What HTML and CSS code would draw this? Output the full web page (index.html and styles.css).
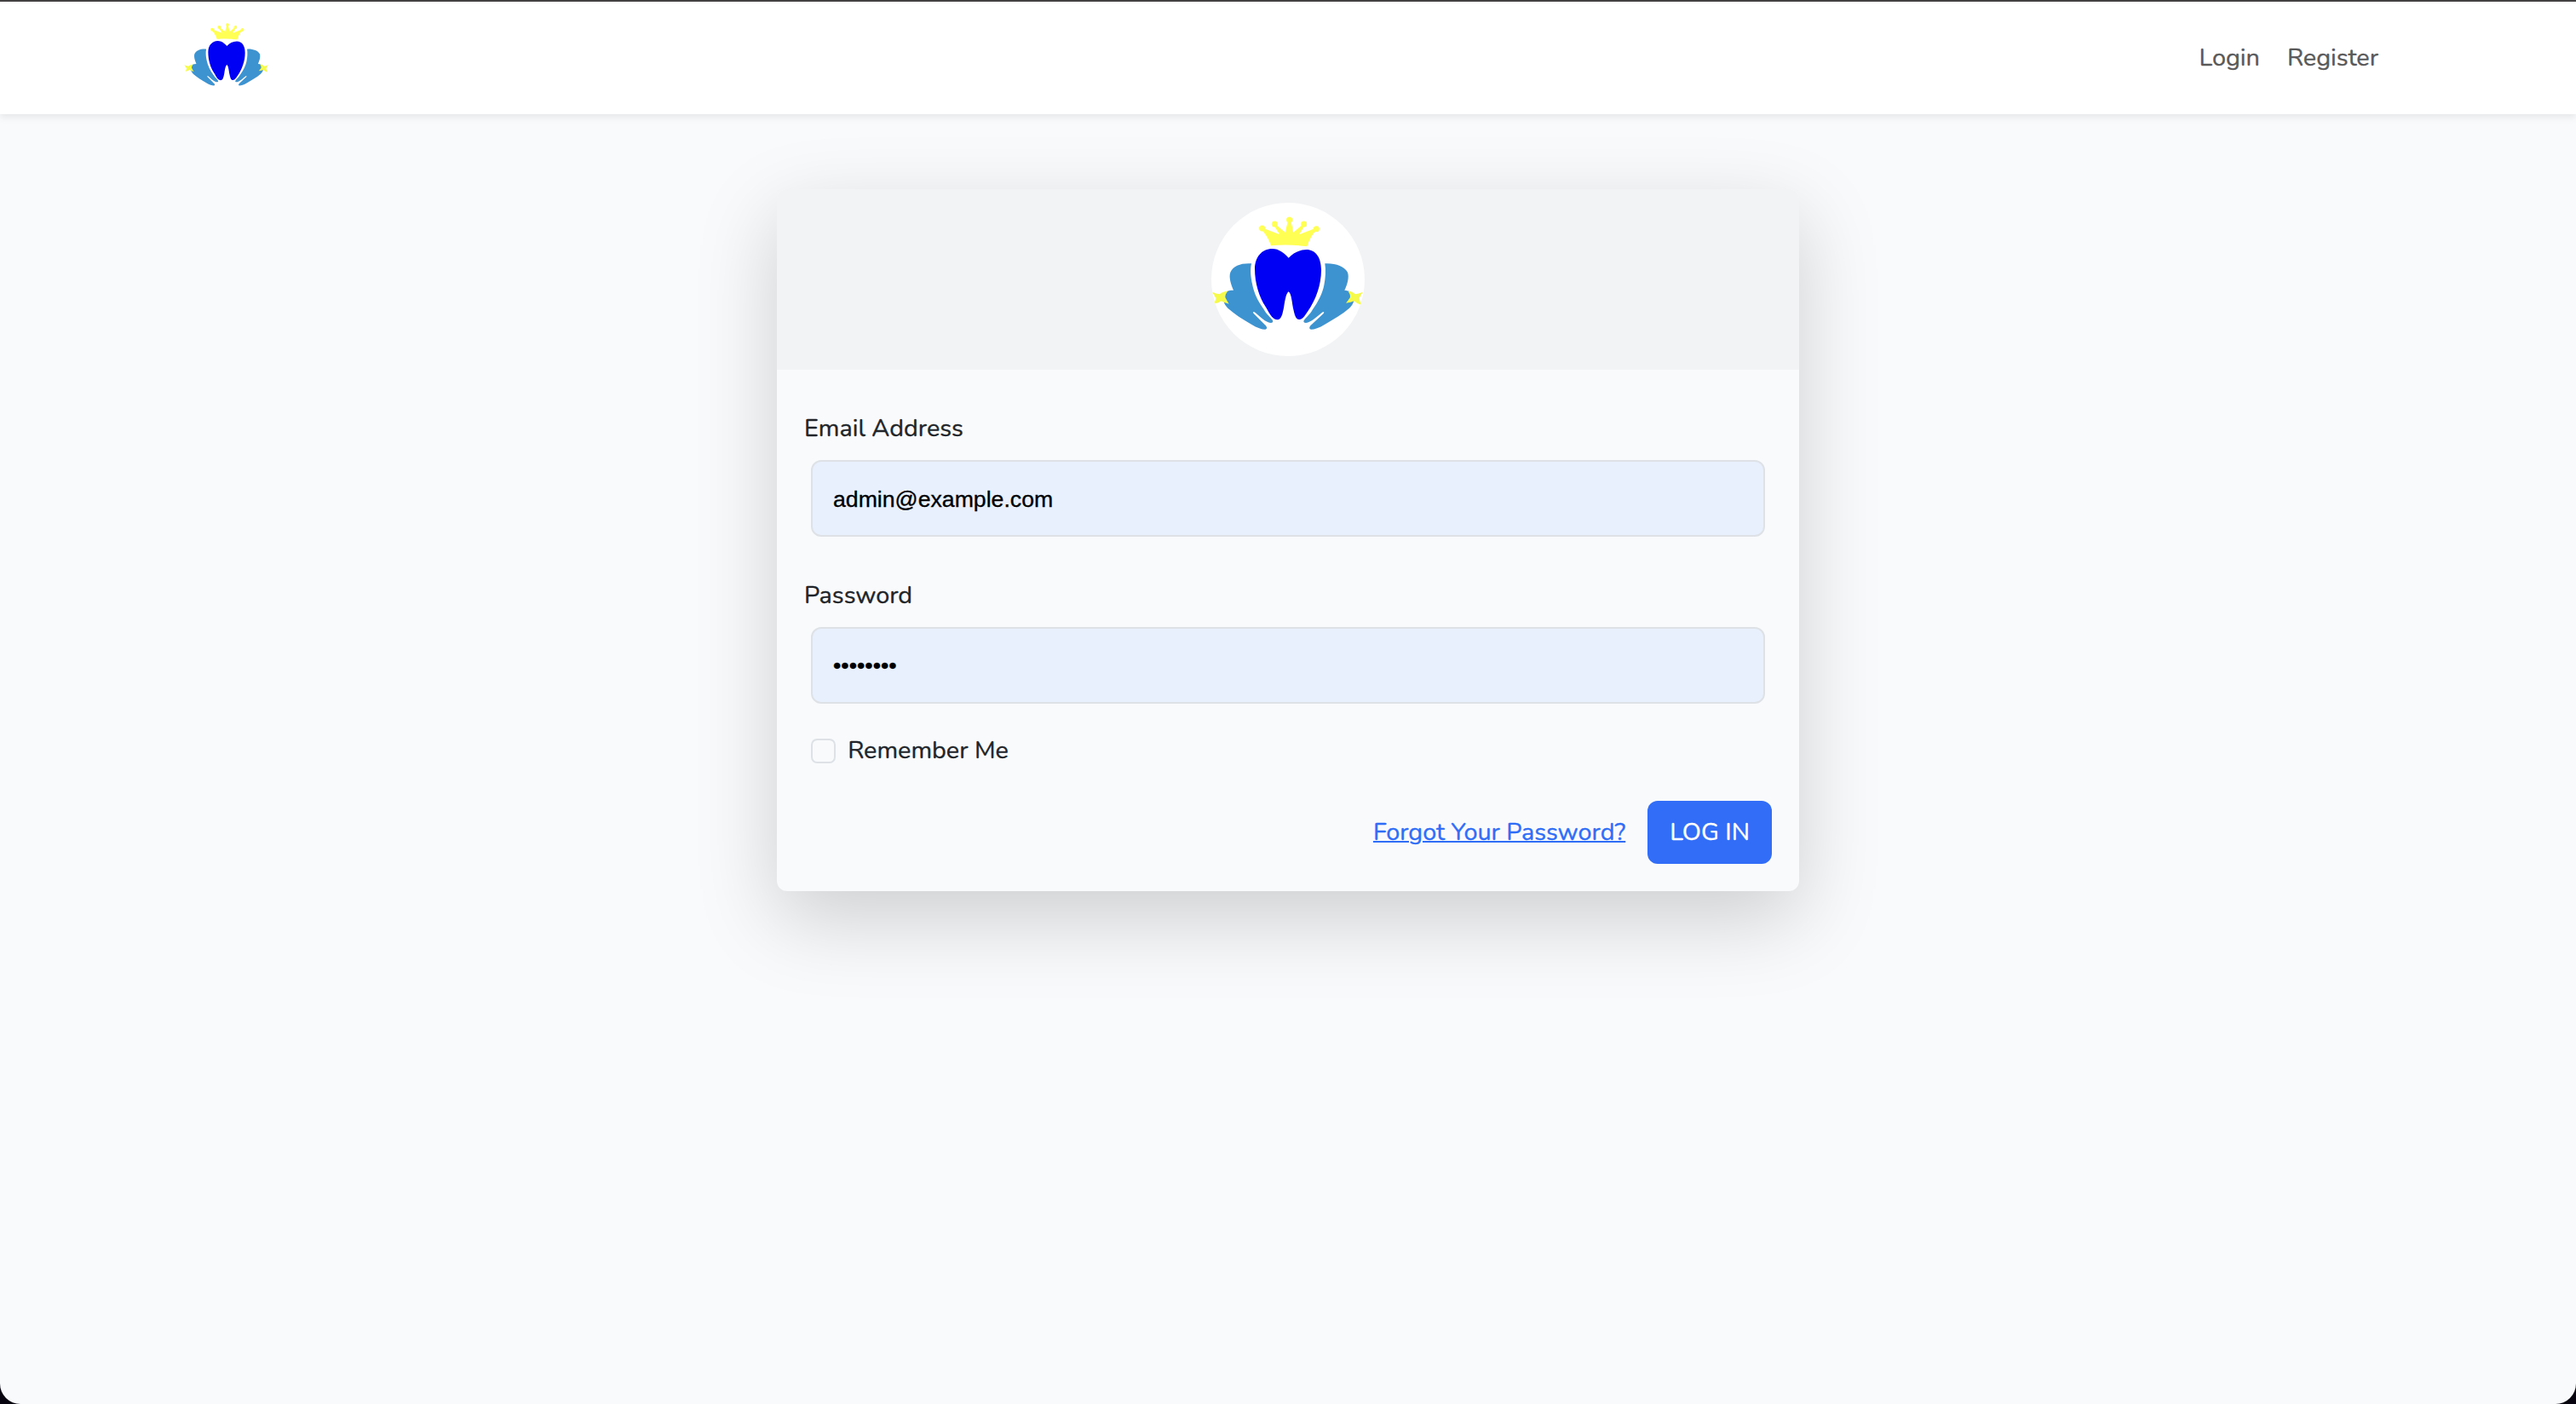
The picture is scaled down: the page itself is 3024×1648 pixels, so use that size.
FILE: index.html
```
<!DOCTYPE html>
<html lang="en">
<head>
<meta charset="utf-8">
<title>Login</title>
<link rel="stylesheet" href="styles.css">
</head>
<body>
<svg class="sprite" width="0" height="0" aria-hidden="true">
  <symbol id="logo" viewBox="66 54 540 540">
    <g fill="#3d92d0">
      <path d="M207 268 C172 266 143 275 133 299 C127 316 135 340 144 362 C125 362 113 367 109 378 C105 392 110 411 124 425 C147 446 177 464 207 482 C227 494 244 500 256 500 C265 497 261 489 254 483 L215 444 C211 439 214 436 220 440 C235 453 250 468 266 475 C276 479 286 477 282 468 C274 456 261 448 252 431 C230 401 216 372 210 340 C205 318 202 291 207 268 Z"/>
      <path d="M466 268 C503 266 534 278 546 299 C552 316 545 342 535 362 C552 364 562 368 567 378 C573 393 566 413 552 425 C527 447 496 464 466 482 C446 494 429 500 417 500 C408 497 412 489 419 483 L461 444 C465 439 462 436 456 440 C441 453 424 468 408 475 C398 479 388 477 392 468 C400 456 413 448 422 431 C443 401 457 374 463 344 C468 320 470 291 466 268 Z"/>
    </g>
    <path fill="#0000f5" d="M338 248 C322 231 304 216 281 216 C243 216 220 246 219 286 C219 336 234 386 257 420 C268 437 278 464 298 466 C314 466 317 443 321 424 C325 402 328 374 338 367 C348 374 350 404 354 425 C359 446 362 465 376 465 C389 463 397 449 405 437 C434 397 453 343 453 291 C453 246 433 219 401 219 C374 220 355 231 338 248 Z"/>
    <g fill="#ffff54">
      <path d="M276 205 C271 188 261 169 246 152 L250 144 L307 166 L287 135 L294 131 L326 158 L336 118 L346 118 L355 158 L387 131 L394 136 L375 166 L430 145 L434 153 C418 169 409 190 403 208 C360 202 318 201 276 205 Z"/>
      <circle cx="245" cy="144" r="10.500"/>
      <circle cx="289" cy="129" r="10.500"/>
      <circle cx="341" cy="114" r="10.500"/>
      <circle cx="392" cy="129" r="10.500"/>
      <circle cx="436" cy="146" r="10.500"/>
    </g>
    <g fill="#f5fa4b">
      <path d="M68 368 Q84 374 95 376 Q108 365 124 365 Q114 377 115 387 Q120 397 128 410 Q111 405 100 400 Q90 409 75 409 Q81 399 82 390 Q77 379 68 368 Z"/>
      <path d="M600 368 Q584 374 573 376 Q564 366 548 365 Q556 377 555 387 Q549 397 540 407 Q558 405 569 400 Q580 411 595 414 Q588 401 587 390 Q591 379 600 368 Z"/>
    </g>
  </symbol>
</svg>
<div class="page">
  <header class="navbar">
    <a class="brand" href="#"><svg class="brand-logo" role="img" aria-label="Home"><use href="#logo"/></svg></a>
    <nav class="nav">
      <a href="#">Login</a>
      <a href="#">Register</a>
    </nav>
  </header>
  <main class="main">
    <section class="card">
      <div class="card-header">
        <div class="avatar"><svg class="avatar-logo" aria-hidden="true"><use href="#logo"/></svg></div>
      </div>
      <form class="card-body">
        <div class="field">
          <label for="email">Email Address</label>
          <input class="control control-email" id="email" type="email" value="admin@example.com">
        </div>
        <div class="field">
          <label for="password">Password</label>
          <input class="control" id="password" type="password" value="password">
        </div>
        <div class="check">
          <input class="checkbox" id="remember" type="checkbox">
          <label for="remember">Remember Me</label>
        </div>
        <div class="actions">
          <a class="forgot" href="#">Forgot Your Password?</a>
          <button class="submit" type="button">LOG IN</button>
        </div>
      </form>
    </section>
  </main>
</div>
</body>
</html>
```
FILE: styles.css
```
* { box-sizing: border-box; }

body {
  margin: 0;
  background: #07040f;
  color: #212529;
  font-family: Nunito, "Open Sans", sans-serif;
  font-size: 28.8px;
  line-height: 1.6;
  -webkit-text-stroke: .35px;
}

.sprite { display: block; }

.page {
  display: flex;
  flex-direction: column;
  height: 1648px;
  overflow: hidden;
  background: #f8fafc;
  border-top: 2px solid #444142;
  border-radius: 0 0 24px 24px;
}

.navbar {
  display: flex;
  align-items: center;
  justify-content: space-between;
  flex: none;
  height: 132px;
  padding: 0 232px 0 216px;
  background: #fff;
  box-shadow: 0 4px 8px rgba(0, 0, 0, .075);
}

.brand { display: flex; }
.brand-logo { width: 100px; height: 100px; }

.nav { display: flex; gap: 32px; }
.nav a { color: #595959; text-decoration: none; }

.main {
  display: flex;
  justify-content: center;
  padding-top: 88px;
}

.card {
  width: 1200px;
  border-radius: 12px;
  background: #f8fafc;
  box-shadow: 0 32px 96px rgba(0, 0, 0, .175);
}

.card-header {
  display: flex;
  justify-content: center;
  padding: 16px;
  border-radius: 12px 12px 0 0;
  background: #f1f3f5;
}

.avatar {
  width: 180px;
  height: 180px;
  overflow: hidden;
  border-radius: 50%;
  background: #fff;
}
.avatar-logo { display: block; width: 180px; height: 180px; }

.card-body {
  display: flex;
  flex-direction: column;
  gap: 32px;
  padding: 32px;
}

.field { display: flex; flex-direction: column; }
.field label { height: 74px; padding: 14px 0; }

.control {
  height: 90px;
  margin: 0 8px;
  padding: 0 24px;
  border: 2px solid #dee2e6;
  border-radius: 12px;
  background: #e8f0fe;
  color: #000;
  font: 26.667px "Liberation Sans", Arial, sans-serif;
}
.control-email { padding-top: 2px; -webkit-text-stroke: .35px; }

.check {
  display: flex;
  align-items: center;
  gap: 14.4px;
  height: 46px;
  margin: 0 8px 4px;
}

.checkbox {
  width: 28.8px;
  height: 28.8px;
  margin: 1px 0 0;
  appearance: none;
  border: 2px solid #dee2e6;
  border-radius: 7.2px;
  background: #f8fafc;
}

.actions {
  display: flex;
  align-items: center;
  justify-content: flex-end;
  gap: 26px;
}

.forgot { color: #2f6df6; text-decoration-thickness: 2px; }

.submit {
  height: 74px;
  padding: 0 26px;
  border: 0;
  border-radius: 12px;
  background: #316df6;
  color: #fff;
  font: inherit;
}
```
